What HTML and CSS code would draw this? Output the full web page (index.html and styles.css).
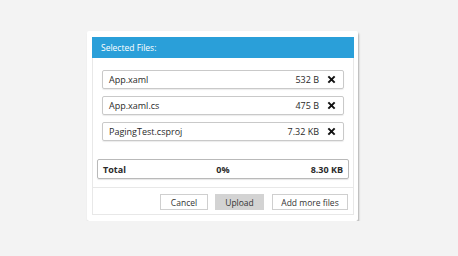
FILE: index.html
```html
<!DOCTYPE html>
<html>
<head>
  <title>Upload Files</title>
  <meta name="viewport" content="width=device-width, initial-scale=1" />
  <link rel="stylesheet" href="styles.css">
</head>
<body>
  <div class="card">
    <div class="panel">
      <div class="header">Selected Files:</div>
      <div class="files">
        <div class="file">
          <span class="name">App.xaml</span>
          <span class="size">532 B</span>
          <svg class="remove" viewBox="0 0 10 10"><path d="M1.5 1.5 L8.5 8.5 M8.5 1.5 L1.5 8.5" /></svg>
        </div>
        <div class="file">
          <span class="name">App.xaml.cs</span>
          <span class="size">475 B</span>
          <svg class="remove" viewBox="0 0 10 10"><path d="M1.5 1.5 L8.5 8.5 M8.5 1.5 L1.5 8.5" /></svg>
        </div>
        <div class="file">
          <span class="name">PagingTest.csproj</span>
          <span class="size">7.32 KB</span>
          <svg class="remove" viewBox="0 0 10 10"><path d="M1.5 1.5 L8.5 8.5 M8.5 1.5 L1.5 8.5" /></svg>
        </div>
      </div>
      <div class="total">
        <span class="total-label">Total</span>
        <span class="total-pct">0%</span>
        <span class="total-size">8.30 KB</span>
      </div>
      <div class="actions">
        <button class="btn cancel">Cancel</button>
        <button class="btn upload">Upload</button>
        <button class="btn more">Add more files</button>
      </div>
    </div>
  </div>
</body>
</html>
```

FILE: styles.css
```css
body { margin: 0; background: #f3f3f3; font-family: "Open Sans", "Noto Sans", sans-serif; font-size: 9px; color: #2a2a2a; }
.card { margin: 31px 0 0 87px; width: 262px; padding: 6px 4px 6px 5px; background: #fff; box-shadow: 1px 2px 2px rgba(0,0,0,0.28); border-radius: 2px; }
.panel { border: 1px solid #e8e8e8; border-top: none; }
.header { height: 21px; line-height: 21px; background: #2a9fd9; color: #fff; padding-left: 9px; margin: 0 -1px; font-size: 8.5px; }
.files { display: flex; flex-direction: column; gap: 7px; padding: 12px 9px 0 9px; }
.file { display: flex; align-items: center; height: 17px; border: 1px solid #c9c9c9; border-radius: 2px; padding: 0 7px 0 6px; box-shadow: 0 1px 1px rgba(0,0,0,0.08); }
.name { flex: 1; }
.size { margin-right: 8px; }
.remove { width: 9px; height: 9px; }
.remove path { stroke: #111; stroke-width: 2.2; fill: none; }
.total { display: grid; grid-template-columns: 1fr auto 1fr; align-items: center; height: 18px; margin: 18px 4px 0 4px; border: 1px solid #b9b9b9; border-radius: 2px; padding: 0 5px; font-weight: bold; box-shadow: 0 1px 1px rgba(0,0,0,0.1); }
.total-pct { text-align: center; }
.total-size { text-align: right; }
.actions { display: flex; justify-content: flex-end; gap: 7px; margin-top: 8px; border-top: 1px solid #e8e8e8; padding: 6px 5px 4px 0; }
.btn { font: inherit; font-size: 8.5px; color: #333; height: 16px; padding: 0; border: 1px solid #cfcfcf; background: #fff; }
.cancel { width: 48px; }
.upload { width: 49px; background: #d3d3d3; border-color: #d3d3d3; margin-right: 1px; }
.more { width: 76px; }
```
